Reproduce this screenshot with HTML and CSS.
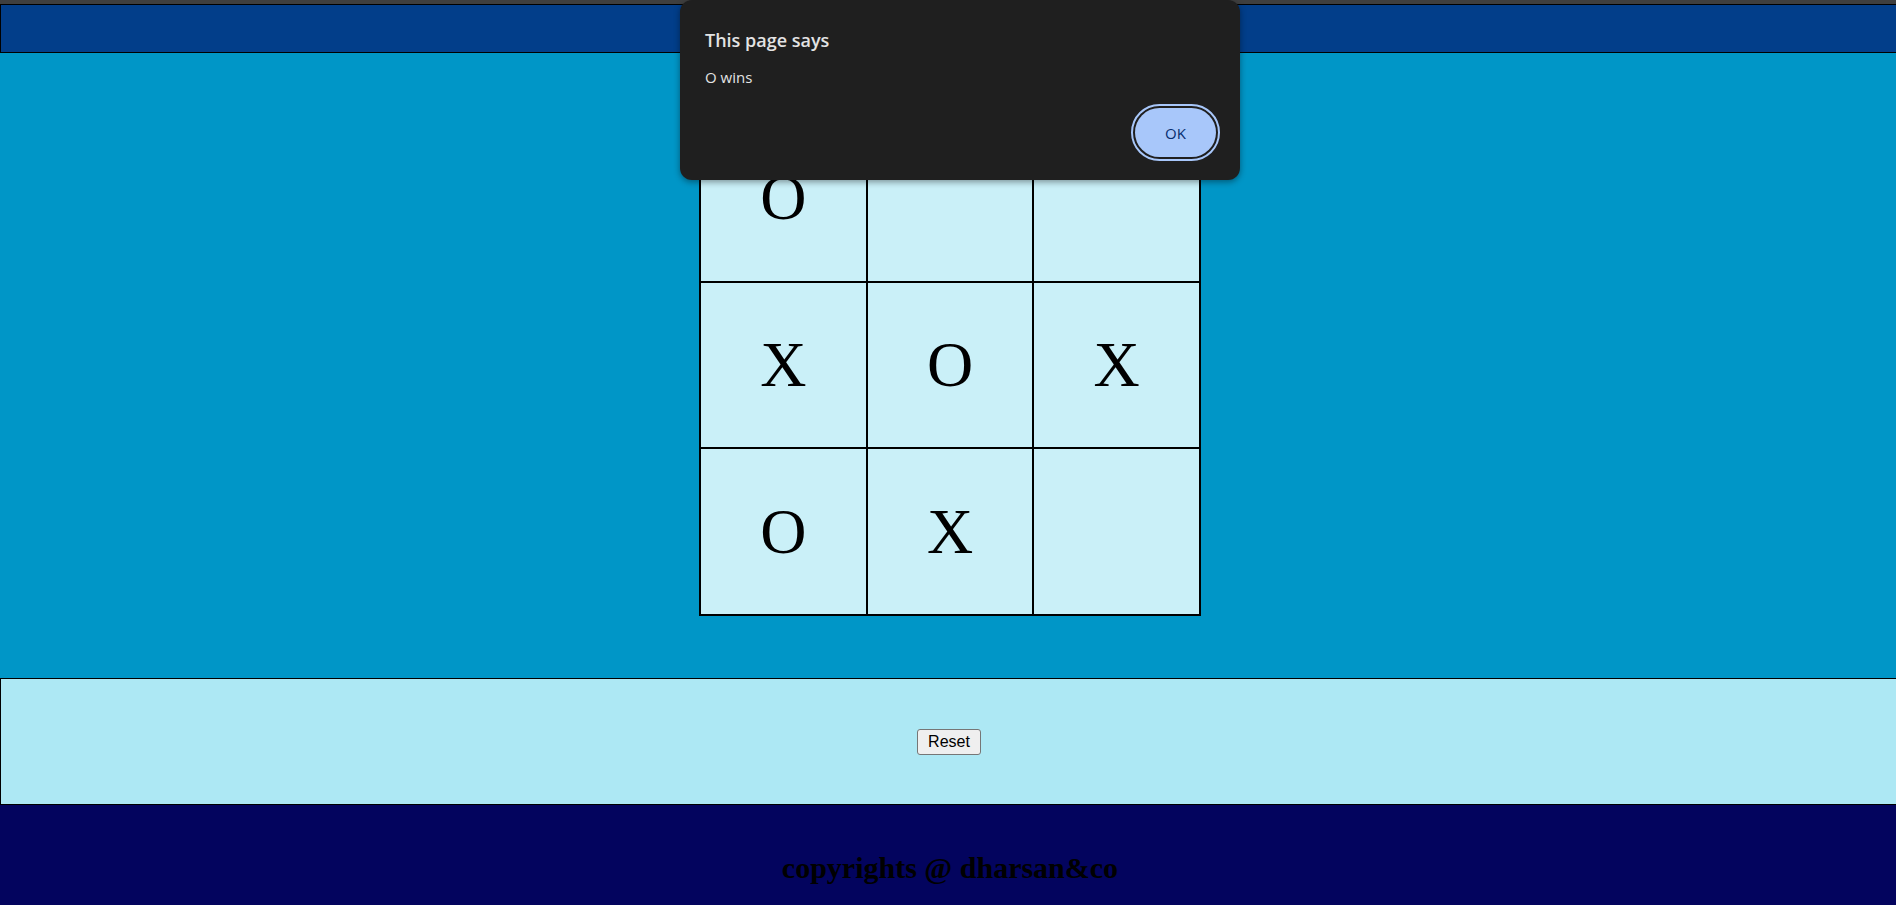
FILE: index.html
```html
<!DOCTYPE html>
<html lang="en">
<head>
<meta charset="utf-8">
<title>Tic Tac Toe</title>
<link rel="stylesheet" href="styles.css">
</head>
<body>
  <header class="top-bar"></header>
  <main class="game-area">
    <div class="board">
      <div class="cell">O</div>
      <div class="cell"></div>
      <div class="cell"></div>
      <div class="cell">X</div>
      <div class="cell">O</div>
      <div class="cell">X</div>
      <div class="cell">O</div>
      <div class="cell">X</div>
      <div class="cell"></div>
    </div>
  </main>
  <section class="controls">
    <button class="reset-btn">Reset</button>
  </section>
  <footer class="site-footer">
    <p class="copyright">copyrights @ dharsan&amp;co</p>
  </footer>

  <div class="dialog">
    <div class="dialog-title">This page says</div>
    <div class="dialog-msg">O wins</div>
    <div class="dialog-actions">
      <button class="ok-btn">OK</button>
    </div>
  </div>
</body>
</html>
```

FILE: styles.css
```css
html {
  overflow: hidden;
}

body {
  margin: 0;
  background: #3f3f3f;
  font-family: "Liberation Serif", "Times New Roman", serif;
  position: relative;
}

.top-bar {
  margin-top: 4px;
  height: 47px;
  width: 100%;
  background: #023e8a;
  border: 1px solid #000;
}

.game-area {
  width: 100%;
  background: #0096c7;
  padding: 61px 0 62px 2px;
  display: flex;
  justify-content: center;
}

.board {
  width: 500px;
  height: 500px;
  border: 1px solid #000;
  display: grid;
  grid-template-columns: repeat(3, 1fr);
  grid-template-rows: repeat(3, 1fr);
}

.cell {
  background: #caf0f8;
  border: 1px solid #000;
  display: flex;
  align-items: center;
  justify-content: center;
  font-family: "Liberation Serif", "Times New Roman", serif;
  font-size: 64px;
  color: #000;
}

.controls {
  width: 100%;
  height: 125px;
  background: #ade8f4;
  border: 1px solid #000;
  display: flex;
  align-items: center;
  justify-content: center;
}

.reset-btn {
  font-family: "Liberation Sans", Arial, sans-serif;
  font-size: 16px;
  line-height: 18px;
  padding: 3px 10px;
  background: #efefef;
  color: #000;
  border: 1px solid #767676;
  border-radius: 3px;
}

.site-footer {
  width: 100%;
  padding: 46px 0 20px 2px;
  background: #03045e;
}

.copyright {
  margin: 0;
  text-align: center;
  font-family: "Liberation Serif", "Times New Roman", serif;
  font-weight: bold;
  font-size: 30px;
  line-height: 34px;
  color: #000;
}

.dialog {
  position: absolute;
  top: 0;
  left: 680px;
  width: 560px;
  height: 180px;
  box-sizing: border-box;
  padding: 28px 24px 0 25px;
  background: #1f1f1f;
  border-radius: 12px;
  box-shadow: 0 2px 6px rgba(0, 0, 0, 0.4);
  font-family: "Open Sans", "Noto Sans", sans-serif;
  color: #e3e3e3;
}

.dialog-title {
  font-size: 18px;
  font-weight: 600;
  line-height: 24px;
}

.dialog-msg {
  margin-top: 15px;
  font-size: 15px;
  line-height: 20px;
}

.dialog-actions {
  margin-top: 21px;
  display: flex;
  justify-content: flex-end;
}

.ok-btn {
  width: 81px;
  height: 49px;
  border: none;
  border-radius: 25px;
  background: #a8c7fa;
  color: #062e6f;
  font-family: "Open Sans", "Noto Sans", sans-serif;
  font-size: 15px;
  outline: 2px solid #a8c7fa;
  outline-offset: 2px;
}
```
